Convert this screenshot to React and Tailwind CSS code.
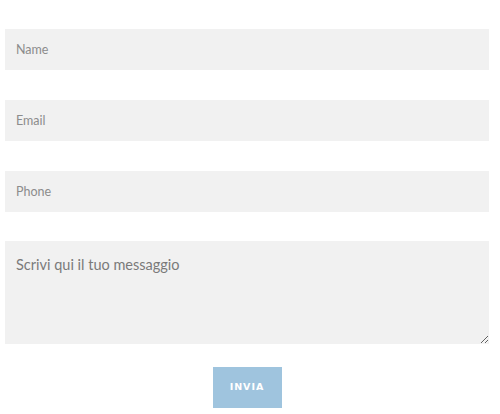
import React, { useState } from 'react';

const ContactForm = () => {
  const [name, setName] = useState('');
  const [email, setEmail] = useState('');
  const [phone, setPhone] = useState('');
  const [message, setMessage] = useState('');

  const inputClass =
    "block w-full h-[41px] px-[11px] bg-[#f1f1f1] text-[12.5px] text-[#555] placeholder:text-[#8c8c8c] border-0 outline-none";

  return (
    <div className="min-h-screen bg-white pt-[29px] pl-[5px] font-['Lato',sans-serif]">
      <form className="w-[484px] flex flex-col" onSubmit={(e) => e.preventDefault()}>
        <input
          type="text"
          placeholder="Name"
          value={name}
          onChange={(e) => setName(e.target.value)}
          className={inputClass}
        />
        <input
          type="email"
          placeholder="Email"
          value={email}
          onChange={(e) => setEmail(e.target.value)}
          className={`${inputClass} mt-[30px]`}
        />
        <input
          type="tel"
          placeholder="Phone"
          value={phone}
          onChange={(e) => setPhone(e.target.value)}
          className={`${inputClass} mt-[30px]`}
        />
        <textarea
          placeholder="Scrivi qui il tuo messaggio"
          value={message}
          onChange={(e) => setMessage(e.target.value)}
          className="block w-full h-[103px] mt-[29px] px-[11px] py-[14px] bg-[#f1f1f1] text-[14.5px] leading-[20px] text-[#555] placeholder:text-[#7a7a7a] border-0 outline-none resize-y"
        />
        <div className="flex justify-center mt-[23px]">
          <button
            type="submit"
            className="w-[69px] h-[41px] bg-[#9fc4de] text-white text-[9.5px] font-bold tracking-[1px] font-['DejaVu_Sans',sans-serif]"
          >
            INVIA
          </button>
        </div>
      </form>
    </div>
  );
};

export default function App() {
  return <ContactForm />;
}
